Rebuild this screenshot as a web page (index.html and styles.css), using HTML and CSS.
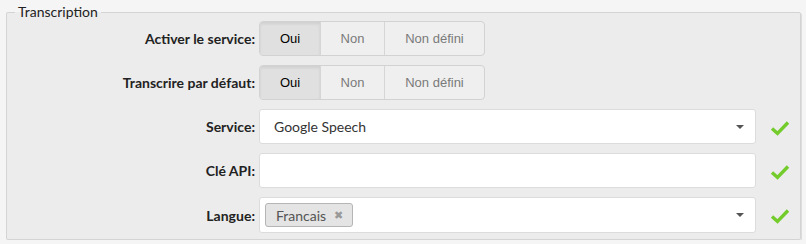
FILE: index.html
```html
<!DOCTYPE html>
<html lang="fr">
<head>
  <meta charset="UTF-8">
  <title>Transcription</title>
  <link rel="stylesheet" href="styles.css">
</head>
<body>
  <fieldset class="panel">
    <legend>Transcription</legend>

    <div class="form-grid">
      <!-- Activer le service -->
      <label class="field-label">Activer le service:</label>
      <div class="btn-group">
        <span class="btn active">Oui</span>
        <span class="btn btn-non">Non</span>
        <span class="btn btn-undef">Non défini</span>
      </div>
      <span></span>

      <!-- Transcrire par defaut -->
      <label class="field-label">Transcrire par défaut:</label>
      <div class="btn-group">
        <span class="btn active">Oui</span>
        <span class="btn btn-non">Non</span>
        <span class="btn btn-undef">Non défini</span>
      </div>
      <span></span>

      <!-- Service -->
      <label class="field-label">Service:</label>
      <div class="input select">
        <span class="value">Google Speech</span>
        <span class="caret"></span>
      </div>
      <span class="check"><svg width="20" height="16" viewBox="0 0 20 16"><path d="M2 8.5 L7.5 13.5 L18 2.5" fill="none" stroke="#74cc2c" stroke-width="3.4"/></svg></span>

      <!-- Cle API -->
      <label class="field-label">Clé API:</label>
      <div class="input"></div>
      <span class="check"><svg width="20" height="16" viewBox="0 0 20 16"><path d="M2 8.5 L7.5 13.5 L18 2.5" fill="none" stroke="#74cc2c" stroke-width="3.4"/></svg></span>

      <!-- Langue -->
      <label class="field-label">Langue:</label>
      <div class="input select multi">
        <span class="tag">Francais <span class="tag-x">&#10006;</span></span>
        <span class="caret"></span>
      </div>
      <span class="check"><svg width="20" height="16" viewBox="0 0 20 16"><path d="M2 8.5 L7.5 13.5 L18 2.5" fill="none" stroke="#74cc2c" stroke-width="3.4"/></svg></span>
    </div>
  </fieldset>
</body>
</html>
```

FILE: styles.css
```css
* {
  box-sizing: border-box;
}

body {
  margin: 0;
  padding: 4px 5px 0 6px;
  background: #f5f5f5;
  font-family: Lato, "Liberation Sans", sans-serif;
  color: #333;
}

.panel {
  margin: 0;
  padding: 1px 0 6px 0;
  background: #ececec;
  border: 1px solid #d4d4d4;
  border-radius: 2px;
  box-shadow: 1px 1px 0 #dcdcdc;
}

.panel legend {
  margin-left: 8px;
  padding: 0 3px;
  font-size: 14px;
  line-height: 16px;
  color: #222;
}

.form-grid {
  display: grid;
  grid-template-columns: 252px 497px 44px;
  grid-template-rows: 35px 35px 35px 35px 36px;
  row-gap: 9px;
  align-items: center;
}

.field-label {
  justify-self: end;
  margin-right: 4px;
  font-size: 14px;
  font-weight: bold;
  color: #222;
}

.btn-group {
  display: flex;
  width: 226px;
  height: 35px;
  border: 1px solid #d2d2d2;
  border-radius: 4px;
  background: #efefef;
  overflow: hidden;
  font-family: "Liberation Sans", Arial, sans-serif;
  font-size: 13px;
}

.btn {
  display: flex;
  align-items: center;
  justify-content: center;
  color: #7a7a7a;
  border-right: 1px solid #d6d6d6;
}

.btn.active {
  width: 61px;
  background: #e0e0e0;
  color: #000;
  box-shadow: inset 0 2px 3px rgba(0, 0, 0, 0.08);
}

.btn-non {
  width: 64px;
}

.btn-undef {
  flex: 1;
  border-right: none;
}

.input {
  height: 35px;
  background: #fff;
  border: 1px solid #dcdcdc;
  border-radius: 3px;
  display: flex;
  align-items: center;
  position: relative;
}

.select .value {
  padding-left: 14px;
  font-size: 14px;
  color: #333;
}

.caret {
  position: absolute;
  right: 11px;
  top: 15px;
  border-left: 4px solid transparent;
  border-right: 4px solid transparent;
  border-top: 4px solid #555;
}

.multi {
  height: 36px;
  padding-left: 5px;
}

.tag {
  display: inline-flex;
  align-items: center;
  height: 24px;
  padding: 0 9px 0 10px;
  background: #e4e4e4;
  border: 1px solid #b5b5b5;
  border-radius: 3px;
  font-size: 14px;
  color: #555;
}

.tag-x {
  margin-left: 8px;
  font-size: 11px;
  color: #999;
}

.check {
  display: flex;
  justify-content: center;
  padding-left: 4px;
  padding-top: 2px;
}
```
